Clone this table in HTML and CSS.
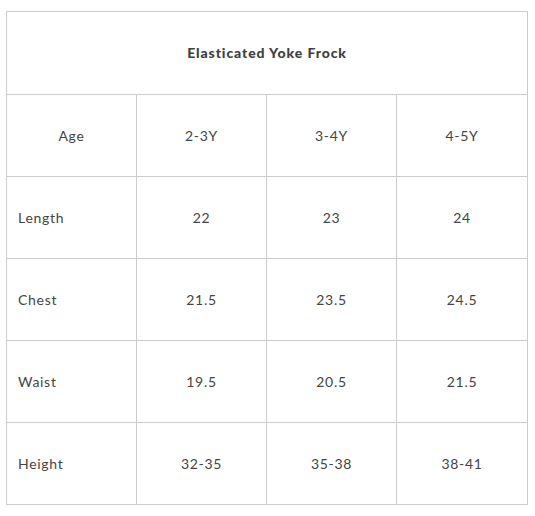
FILE: index.html
```html
<!DOCTYPE html>
<html>
<head>
<meta charset="utf-8">
<link rel="stylesheet" href="styles.css">
</head>
<body>
<div class="wrap">
<table class="size-table">
  <colgroup><col class="c1"><col class="c2"><col class="c3"><col class="c4"></colgroup>
  <tr class="title-row"><td colspan="4" class="title">Elasticated Yoke Frock</td></tr>
  <tr><td class="center">Age</td><td class="center">2-3Y</td><td class="center">3-4Y</td><td class="center">4-5Y</td></tr>
  <tr><td class="label">Length</td><td class="center">22</td><td class="center">23</td><td class="center">24</td></tr>
  <tr><td class="label">Chest</td><td class="center">21.5</td><td class="center">23.5</td><td class="center">24.5</td></tr>
  <tr><td class="label">Waist</td><td class="center">19.5</td><td class="center">20.5</td><td class="center">21.5</td></tr>
  <tr><td class="label">Height</td><td class="center">32-35</td><td class="center">35-38</td><td class="center">38-41</td></tr>
</table>
</div>
</body>
</html>
```
FILE: styles.css
```css
html, body { margin: 0; padding: 0; background: #fff; }
.wrap { padding: 11px 0 0 6px; }
.size-table {
  border-collapse: collapse;
  width: 521px;
  table-layout: fixed;
  font-family: "Lato", "Noto Sans", sans-serif;
  font-size: 14px;
  letter-spacing: 0.7px;
  color: #444;
}
.c1, .c2, .c3 { width: 130px; }
.c4 { width: 131px; }
.size-table td {
  border: 1px solid #ccc;
  padding: 0 11px;
  vertical-align: middle;
  box-sizing: border-box;
}
.size-table tr:not(.title-row) td { height: 82px; }
.title-row td { height: 83px; padding-bottom: 2px; }
.title { text-align: center; font-weight: 900; letter-spacing: 0.9px; color: #404040; }
.center { text-align: center; }
.label { text-align: left; }
```
